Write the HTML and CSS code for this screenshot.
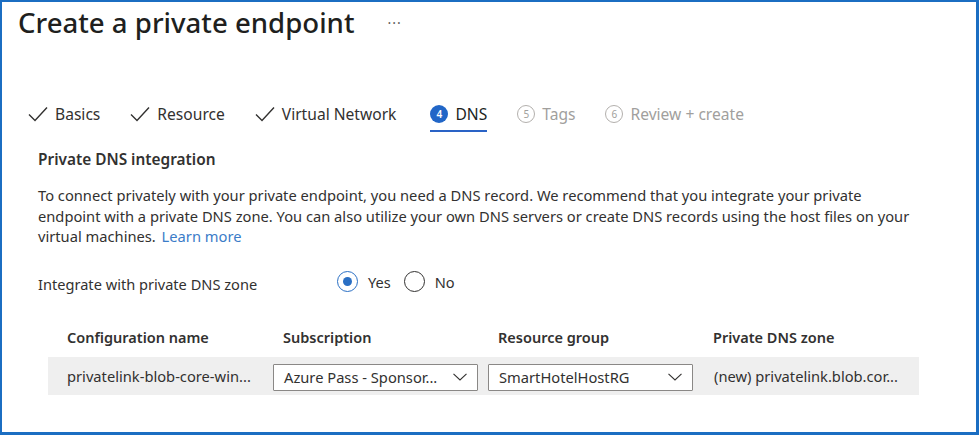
FILE: index.html
```html
<!DOCTYPE html>
<html lang="en">
<head>
<meta charset="utf-8">
<title>Create a private endpoint</title>
<link rel="stylesheet" href="styles.css">
</head>
<body>
<div class="frame">
  <header class="header">
    <h1 class="title">Create a private endpoint</h1>
    <span class="more">···</span>
  </header>

  <nav class="tabs">
    <div class="tab done">
      <svg class="check" width="20" height="16" viewBox="0 0 20 16"><path d="M1 8.5 L7 14.5 L19 1.5" fill="none" stroke="#323130" stroke-width="1.4"/></svg>
      <span>Basics</span>
    </div>
    <div class="tab done">
      <svg class="check" width="20" height="16" viewBox="0 0 20 16"><path d="M1 8.5 L7 14.5 L19 1.5" fill="none" stroke="#323130" stroke-width="1.4"/></svg>
      <span>Resource</span>
    </div>
    <div class="tab done">
      <svg class="check" width="20" height="16" viewBox="0 0 20 16"><path d="M1 8.5 L7 14.5 L19 1.5" fill="none" stroke="#323130" stroke-width="1.4"/></svg>
      <span>Virtual Network</span>
    </div>
    <div class="tab active">
      <span class="num">4</span>
      <span>DNS</span>
    </div>
    <div class="tab disabled">
      <span class="num">5</span>
      <span>Tags</span>
    </div>
    <div class="tab disabled">
      <span class="num">6</span>
      <span>Review + create</span>
    </div>
  </nav>

  <section class="content">
    <h2 class="section-title">Private DNS integration</h2>
    <p class="desc">To connect privately with your private endpoint, you need a DNS record. We recommend that you integrate your private<br>endpoint with a private DNS zone. You can also utilize your own DNS servers or create DNS records using the host files on your<br>virtual machines. <a class="link" href="#">Learn more</a></p>

    <div class="field">
      <span class="field-label">Integrate with private DNS zone</span>
      <div class="radios">
        <label class="radio"><span class="dot checked"></span>Yes</label>
        <label class="radio"><span class="dot"></span>No</label>
      </div>
    </div>
  </section>

  <div class="table">
    <div class="th first">Configuration name</div>
    <div class="th">Subscription</div>
    <div class="th">Resource group</div>
    <div class="th">Private DNS zone</div>

    <div class="tr">
      <div class="td first">privatelink-blob-core-win...</div>
      <div class="td sel">
        <div class="dropdown"><span>Azure Pass - Sponsor...</span>
          <svg class="chev" width="14" height="8" viewBox="0 0 14 8"><path d="M0.5 0.8 L7 7 L13.5 0.8" fill="none" stroke="#323130" stroke-width="1.1"/></svg>
        </div>
      </div>
      <div class="td sel">
        <div class="dropdown"><span>SmartHotelHostRG</span>
          <svg class="chev" width="14" height="8" viewBox="0 0 14 8"><path d="M0.5 0.8 L7 7 L13.5 0.8" fill="none" stroke="#323130" stroke-width="1.1"/></svg>
        </div>
      </div>
      <div class="td last">(new) privatelink.blob.cor...</div>
    </div>
  </div>
</div>
</body>
</html>
```

FILE: styles.css
```css
* { box-sizing: border-box; }
html, body { margin: 0; padding: 0; }
body {
  font-family: "Noto Sans", "Open Sans", sans-serif;
  color: #323130;
  background: #ffffff;
}
.frame {
  width: 979px;
  height: 435px;
  border: 2px solid #1b6ec2;
  border-right-width: 3px;
  border-bottom-width: 3px;
  overflow: hidden;
}
.header {
  height: 40px;
  display: flex;
  align-items: center;
  padding-left: 16px;
}
.title {
  margin: 0;
  font-size: 27.6px;
  font-weight: 500;
  color: #201f1e;
  line-height: 40px;
}
.more {
  margin-left: 33px;
  font-size: 14px;
  color: #605e5c;
  letter-spacing: 1px;
}
.tabs {
  margin-top: 56px;
  height: 34px;
  display: flex;
  gap: 30px;
  padding-left: 26px;
}
.tab {
  display: flex;
  align-items: center;
  gap: 7px;
  font-size: 15.6px;
  height: 34px;
  color: #323130;
  border-bottom: 2px solid transparent;
}
.tab.active {
  border-bottom-color: #2a63c6;
  color: #201f1e;
  margin-left: 4px;
}
.tab.disabled { color: #a19f9d; }
.check { display: block; }
.num {
  width: 18px;
  height: 18px;
  border-radius: 50%;
  display: inline-flex;
  align-items: center;
  justify-content: center;
  font-size: 10px;
  font-weight: 600;
}
.active .num { background: #2166c7; color: #fff; }
.disabled .num { border: 1px solid #b3b0ad; color: #a19f9d; font-weight: 400; }
.content { padding-left: 36px; }
.section-title {
  margin: 18px 0 0;
  font-size: 15.4px;
  font-weight: 600;
  line-height: 20px;
  color: #323130;
}
.desc {
  margin: 15px 0 0;
  font-size: 14.7px;
  line-height: 20.5px;
  color: #323130;
}
.link { color: #3b7cc8; text-decoration: none; margin-left: 2px; }
.field {
  margin-top: 23px;
  display: flex;
  align-items: center;
  height: 24px;
}
.field-label { width: 299px; font-size: 14.6px; padding-top: 4px; }
.radios { display: flex; gap: 13px; }
.radio {
  display: flex;
  align-items: center;
  gap: 10px;
  font-size: 14.6px;
}
.dot {
  width: 21px;
  height: 21px;
  border-radius: 50%;
  border: 1.3px solid #323130;
  display: inline-block;
  position: relative;
}
.dot.checked { border-color: #2a6fc4; }
.dot.checked::after {
  content: "";
  position: absolute;
  left: 4.5px;
  top: 4.5px;
  width: 9.5px;
  height: 9.5px;
  border-radius: 50%;
  background: #2a6fc4;
}
.table {
  margin-top: 33px;
  margin-left: 46px;
  width: 871px;
  display: grid;
  grid-template-columns: 225px 215px 215px 1fr;
}
.th {
  font-size: 14.5px;
  font-weight: 600;
  line-height: 20px;
  padding-left: 10px;
  padding-bottom: 10px;
  color: #323130;
}
.th.first { padding-left: 19px; }
.tr {
  grid-column: 1 / -1;
  display: grid;
  grid-template-columns: 225px 215px 215px 1fr;
  background: #efefef;
  height: 38px;
  align-items: center;
  font-size: 14.7px;
}
.td.first { padding-left: 19px; }
.td.last { padding-left: 11px; }
.td.sel { padding-top: 3px; }
.dropdown {
  width: 205px;
  height: 27px;
  background: #fff;
  border: 1px solid #8a8886;
  border-radius: 1px;
  display: flex;
  align-items: center;
  justify-content: space-between;
  padding: 0 10px 0 10px;
}
.chev { display: block; }
```
